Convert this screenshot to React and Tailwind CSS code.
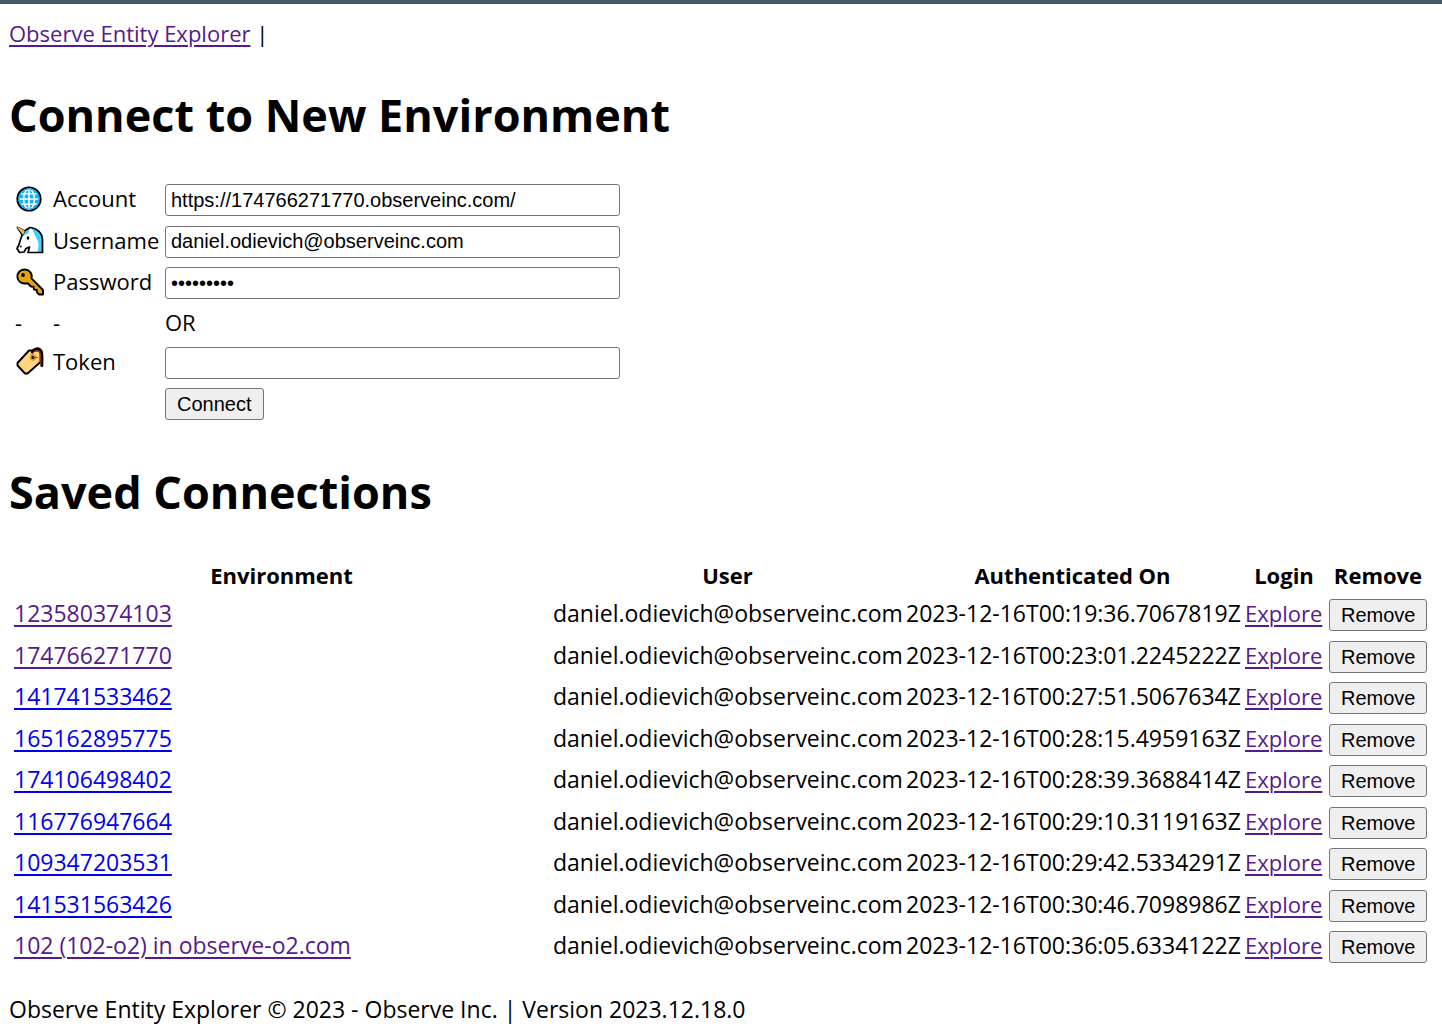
import React from "react";

const connections = [
  { name: "123580374103", on: "2023-12-16T00:19:36.7067819Z", visited: true },
  { name: "174766271770", on: "2023-12-16T00:23:01.2245222Z", visited: true },
  { name: "141741533462", on: "2023-12-16T00:27:51.5067634Z", visited: false },
  { name: "165162895775", on: "2023-12-16T00:28:15.4959163Z", visited: false },
  { name: "174106498402", on: "2023-12-16T00:28:39.3688414Z", visited: false },
  { name: "116776947664", on: "2023-12-16T00:29:10.3119163Z", visited: false },
  { name: "109347203531", on: "2023-12-16T00:29:42.5334291Z", visited: false },
  { name: "141531563426", on: "2023-12-16T00:30:46.7098986Z", visited: false },
  { name: "102 (102-o2) in observe-o2.com", on: "2023-12-16T00:36:05.6334122Z", visited: true },
];

const user = "daniel.odievich@observeinc.com";

function GlobeIcon() {
  return (
    <svg viewBox="0 0 28 28" className="size-7" aria-hidden="true">
      <circle cx="13" cy="14" r="11.6" fill="#12b4f0" stroke="#000" strokeWidth="2" />
      <g fill="none" stroke="#fff" strokeWidth="1.5">
        <path d="M13 4v20M3 14h20M5 8.8h16M5 19.2h16" />
        <ellipse cx="13" cy="14" rx="5.4" ry="10" />
      </g>
      <circle cx="13" cy="14" r="10.1" fill="none" stroke="#12b4f0" strokeWidth="1.4" />
    </svg>
  );
}

function UnicornIcon() {
  return (
    <svg viewBox="0 0 28 28" className="size-7" aria-hidden="true">
      <path
        d="M6 9L9 4.500 14 1.500C21 2 26.500 7 26.500 14v12.500H12l1.500-5.500-3.500 1.500-2 3.500-4.500.5-2.500-4 2-4z"
        fill="#fff"
      />
      <path d="M15.500 2C22 3 26.500 7.500 26.500 14v12.500h-5.500c2.500-6 2-10.500-.5-14C19 9 17.500 6 15.500 2z" fill="#3cd0fa" />
      <path d="M9 4l5-2-2 5.500-4 2z" fill="#3cd0fa" />
      <path
        d="M6 9L9 4.500 14 1.500C21 2 26.500 7 26.500 14v12.500H12l1.500-5.500-3.500 1.500-2 3.500-4.500.5-2.500-4 2-4z"
        fill="none"
        stroke="#000"
        strokeWidth="1.700"
        strokeLinejoin="round"
      />
      <path d="M1.500 1.500l6.500 3.500-1.500 4z" fill="#f2b84b" stroke="#000" strokeWidth="2" strokeLinejoin="round" />
      <path d="M1.800 1.500L8 5 7 8z" fill="#f2b84b" stroke="#f2b84b" strokeWidth="1.200" strokeLinejoin="round" />
      <ellipse cx="12" cy="12" rx="1.300" ry="1.700" />
      <circle cx="4.800" cy="20.500" r=".9" />
    </svg>
  );
}

function KeyIcon() {
  return (
    <svg viewBox="0 0 28 28" className="size-7" aria-hidden="true">
      <path
        d="M8.500 1.500a7 7 0 1 0 1.500 13.800l2 .2 3 3 2.500.3.500 2.700 2.700.5.500 2.800 2 1.700H27v-4.500L15.500 10.300a7 7 0 0 0-7-8.800z"
        fill="#e8a30c"
        stroke="#000"
        strokeWidth="1.900"
        strokeLinejoin="round"
      />
      <circle cx="7" cy="7" r="1.900" />
    </svg>
  );
}

function TagIcon() {
  return (
    <svg viewBox="0 0 28 28" className="size-7" aria-hidden="true">
      <path
        d="M13 3.500h9.500L24.500 6v9L11.500 26.500H9L1.500 18.500V16z"
        fill="#ffd57e"
        stroke="#000"
        strokeWidth="1.900"
        strokeLinejoin="round"
      />
      <path d="M16.500 5C18 1.500 23 .5 25 4c1.500 3 .8 9 .8 14.500" fill="none" stroke="#000" strokeWidth="3" strokeLinecap="round" />
      <circle cx="17" cy="10.500" r="3.200" fill="#e79b22" />
      <circle cx="17" cy="10.500" r="1.600" />
      <path d="M16 8.500C16 5 20 2.500 23 4c2.300 2.500 1.500 8 2 14M17 10.500h5" fill="none" stroke="#c93a20" strokeWidth="1" />
    </svg>
  );
}

function Field({ id, label, type = "text", icon, value = "", rowClass }) {
  return (
    <tr className={rowClass}>
      <td className="w-[38px] pb-[3px] pl-[7px]">{icon}</td>
      <td className="w-[118px] pl-[6px]">
        <label htmlFor={id} className="block pb-[4px]">{label}</label>
      </td>
      <td>
        <input
          id={id}
          type={type}
          defaultValue={value}
          autoComplete="off"
          className="block h-8 w-[455px] rounded-[3px] border border-[#767676] bg-white px-[5px] pb-px font-['Liberation_Sans',Arial,sans-serif] text-[20px]"
        />
      </td>
    </tr>
  );
}

const buttonClass =
  "block h-8 rounded-[3px] border border-[#767676] bg-[#efefef] px-[11px] font-['Liberation_Sans',Arial,sans-serif] text-[20px] leading-[30px]";

export default function App() {
  return (
    <div className="border-t-4 border-[#455a64] bg-white px-[9px] font-['Open_Sans','Noto_Sans',sans-serif] text-[23px] leading-8 text-black">
      <nav className="pt-[13px] text-[22px]">
        <a href="#home" className="text-[#551a8b] underline decoration-2 underline-offset-[3px]">Observe Entity Explorer</a> |
      </nav>

      <main>
        <h1 className="mt-[34px] text-[45px] leading-[64px] font-bold">Connect to New Environment</h1>
        <form className="mt-8 text-[22px]" onSubmit={(e) => e.preventDefault()}>
          <table>
            <tbody>
              <Field id="account" label="Account" icon={<GlobeIcon />} value="https://174766271770.observeinc.com/" rowClass="h-[42px]" />
              <Field id="username" label="Username" icon={<UnicornIcon />} value={user} rowClass="h-[41px]" />
              <Field id="password" label="Password" type="password" icon={<KeyIcon />} value="123456789" rowClass="h-[42px]" />
              <tr className="h-[38px]">
                <td className="pb-[2px] pl-[6px]">-</td>
                <td className="pb-[2px] pl-[6px]">-</td>
                <td className="pb-[2px]">OR</td>
              </tr>
              <Field id="token" label="Token" icon={<TagIcon />} rowClass="h-[41px]" />
              <tr className="h-[42px]">
                <td />
                <td />
                <td>
                  <button type="submit" className={buttonClass}>Connect</button>
                </td>
              </tr>
            </tbody>
          </table>
        </form>

        <h1 className="mt-[35px] text-[45px] leading-[64px] font-bold">Saved Connections</h1>
        <div className="mt-8 pr-[3px] pl-[2px]">
          <table className="w-full table-fixed whitespace-nowrap">
            <colgroup>
              <col />
              <col className="w-[351px]" />
              <col className="w-[339px]" />
              <col className="w-[84px]" />
              <col className="w-[104px]" />
            </colgroup>
            <thead>
              <tr className="h-[38px] text-[22px]">
                <th>Environment</th>
                <th>User</th>
                <th>Authenticated On</th>
                <th>Login</th>
                <th>Remove</th>
              </tr>
            </thead>
            <tbody>
              {connections.map((c) => (
                <tr key={c.name} className="odd:h-[42px] even:h-[41px]">
                  <td className="px-[3px] pb-[4px]">
                    <a
                      href="#environment"
                      className={
                        c.visited
                          ? "text-[#551a8b] underline decoration-2 underline-offset-[3px]"
                          : "text-[#0000ee] underline decoration-2 underline-offset-[3px]"
                      }
                    >
                      {c.name}
                    </a>
                  </td>
                  <td className="px-px pb-[4px]">{user}</td>
                  <td className="px-[3px] pb-[4px]">{c.on}</td>
                  <td className="px-[3px] pb-[4px] text-[22px]">
                    <a href="#explore" className="text-[#551a8b] underline decoration-2 underline-offset-[3px]">Explore</a>
                  </td>
                  <td className="px-[3px]">
                    <button type="button" className={buttonClass}>Remove</button>
                  </td>
                </tr>
              ))}
            </tbody>
          </table>
        </div>
      </main>

      <footer className="mt-[25px]">Observe Entity Explorer © 2023 - Observe Inc. | Version 2023.12.18.0</footer>
    </div>
  );
}
